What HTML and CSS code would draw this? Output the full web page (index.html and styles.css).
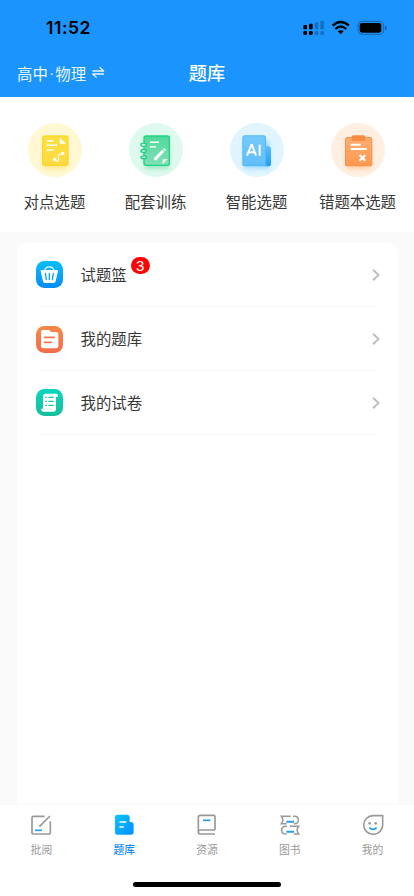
FILE: index.html
```html
<!DOCTYPE html>
<html lang="zh-CN">
<head>
<meta charset="utf-8">
<meta name="viewport" content="width=device-width, initial-scale=1">
<title>题库</title>
<link rel="stylesheet" href="styles.css">
</head>
<body>
<div class="app">
  <header class="header">
    <div class="status">
      <span class="time">11:52</span>
      <svg class="status-icons" viewBox="288 60 252 48">
        <g fill="#000"><rect x="289" y="75" width="11" height="13" rx="3"/><rect x="306" y="71" width="11" height="17" rx="3"/><rect x="289" y="93" width="11" height="12" rx="4"/><rect x="306" y="93" width="11" height="12" rx="4"/></g>
        <g fill="#1670c1"><rect x="323" y="67" width="11" height="21" rx="3"/><rect x="340" y="62" width="11" height="26" rx="3"/><rect x="323" y="93" width="11" height="12" rx="4"/><rect x="340" y="93" width="11" height="12" rx="4"/></g>
        <g fill="none" stroke="#000" stroke-width="6.5"><path d="M377 77Q401 55 426 77"/><path d="M385 87Q401 72 418 87"/></g>
        <path d="M392 94Q401 87 410 94L401 103Z"/>
        <rect x="453" y="64" width="77" height="39" rx="12" fill="none" stroke="#1264ad" stroke-width="3"/>
        <rect x="458" y="69" width="65" height="29" rx="7"/>
        <path d="M534 77Q540 80 540 84T534 91Z" fill="#1264ad"/>
      </svg>
    </div>
    <div class="nav">
      <div class="subject"><span>高中<i class="dot">·</i>物理</span>
        <svg class="swap" viewBox="278 200 38 40" fill="none" stroke="#e8f5ff" stroke-width="4" stroke-linejoin="round"><path d="M279 215H313L301 204M314 224H280L292 235"/></svg>
      </div>
      <h1>题库</h1>
      <span></span>
    </div>
  </header>

  <section class="shortcuts">
    <div class="shortcut">
      <svg viewBox="38 23 162 162">
        <defs><linearGradient id="y" x2="0" y2="1"><stop stop-color="#f9dc2e"/><stop offset="1" stop-color="#ffd32e"/></linearGradient>
        <filter id="blur" x="-30%" y="-30%" width="160%" height="160%"><feGaussianBlur stdDeviation="6"/></filter></defs>
        <circle cx="119" cy="104" r="81" fill="#fff8d2"/>
        <rect x="84" y="75" width="72" height="85" rx="8" fill="#ffd632" opacity=".45" filter="url(#blur)"/>
        <rect x="80" y="60" width="80" height="92" rx="8" fill="url(#y)"/>
        <rect x="84" y="64" width="72" height="84" rx="6" fill="#ffe65c" opacity=".4"/>
        <path d="M133 66L153 86H137Q133 86 133 82Z" fill="#fffbe2"/>
        <g stroke="#fff" fill="none" stroke-width="4.5"><path d="M94 77H114M94 90H125M94 104H114"/><path d="M118 133C127 143 132 134 129 127C126 117 136 116 142 116" stroke-width="3.5"/></g>
        <circle cx="118" cy="132" r="5" fill="#fff"/><circle cx="142" cy="114" r="5" fill="#fff"/>
      </svg><span>对点选题</span>
    </div>
    <div class="shortcut">
      <svg viewBox="40 23 162 162">
        <defs><linearGradient id="g" x2="0" y2="1"><stop stop-color="#51d99b"/><stop offset="1" stop-color="#80dfb8"/></linearGradient></defs>
        <circle cx="121" cy="104" r="81" fill="#def9ed"/>
        <rect x="88" y="75" width="72" height="85" rx="8" fill="#31ce88" opacity=".4" filter="url(#blur)"/>
        <rect x="83" y="60" width="80" height="92" rx="8" fill="#21d482"/><rect x="87" y="64" width="72" height="84" rx="5" fill="url(#g)"/>
        <g fill="#def9ed" stroke="#20ce82" stroke-width="4"><ellipse cx="84" cy="88" rx="8" ry="4.5"/><ellipse cx="84" cy="107" rx="8" ry="4.5"/><ellipse cx="84" cy="126" rx="8" ry="4.5"/></g>
        <path d="M103 81H130M103 94H121" stroke="#fff" stroke-width="4.5"/>
        <path d="M118 132L143 106" stroke="#fff" stroke-width="9"/><path d="M115 135L117 126L125 134Z" fill="#fff"/><path d="M145 104L148 101" stroke="#fff" stroke-width="9"/>
        <path d="M141 147V136Q141 131 146 131H156Z" fill="#e8fff5"/>
      </svg><span>配套训练</span>
    </div>
    <div class="shortcut">
      <svg viewBox="43 23 162 162">
        <defs><linearGradient id="b" x2="0" y2="1"><stop stop-color="#75cafc"/><stop offset="1" stop-color="#61bdfa"/></linearGradient><linearGradient id="b2" x2="0" y2="1"><stop stop-color="#5bbefa"/><stop offset="1" stop-color="#219cef"/></linearGradient></defs>
        <circle cx="124" cy="104" r="81" fill="#e1f5fe"/>
        <rect x="84" y="76" width="78" height="84" rx="8" fill="#47b4ff" opacity=".4" filter="url(#blur)"/>
        <path d="M147 93H158Q166 93 166 101V145Q166 153 158 153H147Z" fill="url(#b2)"/>
        <path d="M88 60H143Q151 60 151 68V144Q151 150 157 153H88Q80 153 80 145V68Q80 60 88 60Z" fill="#50b8fc"/>
        <rect x="83" y="63" width="65" height="87" rx="6" fill="url(#b)"/>
        <path d="M94 121L107 89H109L121 121M99 111H116M132 88V121" fill="none" stroke="#fff" stroke-width="6"/>
      </svg><span>智能选题</span>
    </div>
    <div class="shortcut">
      <svg viewBox="61 23 162 162">
        <defs><linearGradient id="o" x2="0" y2="1"><stop stop-color="#ffad70"/><stop offset="1" stop-color="#ff9951"/></linearGradient></defs>
        <circle cx="142" cy="104" r="81" fill="#ffefe0"/>
        <rect x="108" y="76" width="72" height="84" rx="8" fill="#ff9850" opacity=".4" filter="url(#blur)"/>
        <rect x="103" y="65" width="82" height="88" rx="8" fill="#f99147"/><rect x="106" y="68" width="76" height="82" rx="5" fill="url(#o)"/>
        <rect x="122" y="60" width="43" height="17" rx="7" fill="#f78c43"/>
        <path d="M120 88H150M120 101H168" stroke="#fff" stroke-width="6"/><path d="M147 119L164 136M164 119L147 136" stroke="#fff" stroke-width="6.5"/>
      </svg><span>错题本选题</span>
    </div>
  </section>

  <main class="content">
    <div class="card">
      <div class="row">
        <svg class="row-icon" viewBox="108 108 81 81">
          <defs><linearGradient id="rb" x2="0" y2="1"><stop stop-color="#08bffa"/><stop offset="1" stop-color="#078af8"/></linearGradient></defs>
          <rect x="108" y="108" width="81" height="81" rx="25" fill="url(#rb)"/>
          <path d="M134 139C134 121 162 121 162 139" fill="none" stroke="#fff" stroke-width="4"/>
          <path d="M125 135H171Q175 135 174 139L167 169Q166 174 161 174H135Q130 174 129 169L122 139Q121 135 125 135Z" fill="#fff"/>
          <path d="M136 145L139 164M148 145V164M160 145L157 164" stroke="#0aa5f9" stroke-width="4" stroke-linecap="round"/>
        </svg>
        <span class="row-label">试题篮<b class="badge">3</b></span>
        <svg class="chevron" viewBox="0 0 8 12"><path d="M1 .7L6.6 6L1 11.3"/></svg>
      </div>
      <div class="row">
        <svg class="row-icon row-icon-files" viewBox="108 303 81 81">
          <defs><linearGradient id="ro" x2="0" y2="1"><stop stop-color="#f68a46"/><stop offset="1" stop-color="#f56b4b"/></linearGradient></defs>
          <rect x="108" y="303" width="81" height="81" rx="25" fill="url(#ro)"/>
          <path d="M128 315H145Q149 315 151 318L153 321H169Q175 321 175 327V364Q175 370 169 370H129Q123 370 123 364V320Q123 315 128 315Z" fill="#fff"/>
          <path d="M133 337H163M133 352H154" stroke="#f67850" stroke-width="5" stroke-linecap="round"/>
        </svg>
        <span class="row-label">我的题库</span>
        <svg class="chevron" viewBox="0 0 8 12"><path d="M1 .7L6.6 6L1 11.3"/></svg>
      </div>
      <div class="row">
        <svg class="row-icon" viewBox="108 492 81 81">
          <defs><linearGradient id="rg" x2="0" y2="1"><stop stop-color="#0bd6bd"/><stop offset="1" stop-color="#16bf9d"/></linearGradient></defs>
          <rect x="108" y="492" width="81" height="81" rx="25" fill="url(#rg)"/>
          <path d="M135 506H170Q175 508 174 516H168V552Q168 560 160 560H129Q123 559 123 551H129V513Q129 507 135 506Z" fill="#fff"/>
          <path d="M128 552H156" stroke="#b9eee2" stroke-width="2"/>
          <path d="M136 517H141M145 517H161M136 529H141M145 529H161M136 541H141M145 541H161" stroke="#12c8aa" stroke-width="4"/>
        </svg>
        <span class="row-label">我的试卷</span>
        <svg class="chevron" viewBox="0 0 8 12"><path d="M1 .7L6.6 6L1 11.3"/></svg>
      </div>
    </div>
  </main>

  <nav class="tabbar">
    <div class="tabs">
      <div class="tab"><svg viewBox="91 58 66 66"><path d="M135 65H101Q97 65 97 69V114Q97 118 101 118H148Q152 118 152 114V80M119 96L151 64" fill="none" stroke="#999" stroke-width="5"/><path d="M106 107H127" stroke="#2aa0ee" stroke-width="5"/></svg><span>批阅</span></div>
      <div class="tab active"><svg viewBox="339 58 66 66"><defs><linearGradient id="t" x2="1" y2="1"><stop stop-color="#08c4ff"/><stop offset="1" stop-color="#078eff"/></linearGradient></defs><path d="M352 60H381Q389 60 389 68V82H393Q401 82 401 90V112Q401 120 393 120H352Q345 120 345 112V68Q345 60 352 60Z" fill="url(#t)"/><path d="M389 84V112" stroke="#0798f4" stroke-width="1.5"/><path d="M360 82H377M360 97H370" stroke="#fff" stroke-width="4.5" stroke-linecap="round"/></svg><span>题库</span></div>
      <div class="tab"><svg viewBox="138 58 66 66"><path d="M195 106V66Q195 62 191 62H151Q145 62 145 68V111Q145 118 152 118H195M145 111Q145 106 152 106H195" fill="none" stroke="#999" stroke-width="5"/><path d="M159 77H181" stroke="#2399ec" stroke-width="5"/></svg><span>资源</span></div>
      <div class="tab"><svg viewBox="43 58 66 66"><g fill="none" stroke="#999" stroke-width="4.5"><path d="M78 65H50Q59 76 50 87H66M85 65H90Q101 65 101 76Q101 87 90 87H87"/><path d="M67 95H63Q51 95 51 106.500T63 118H66M75 95H102Q93 106 102 118H87"/></g><path d="M65 81H88M65 111H88" stroke="#27a0ed" stroke-width="6"/></svg><span>图书</span></div>
      <div class="tab"><svg viewBox="292 58 66 66"><path d="M325 63H354V91A28.500 28 0 1 1 325 63Z" fill="none" stroke="#999" stroke-width="4.8"/><circle cx="315" cy="86" r="4" fill="#999"/><circle cx="333" cy="86" r="4" fill="#999"/><path d="M314 99Q325 109 336 99" fill="none" stroke="#229eee" stroke-width="5"/></svg><span>我的</span></div>
    </div>
    <div class="home"></div>
  </nav>
</div>
</body>
</html>
```
FILE: styles.css
```css
* { box-sizing: border-box; }
body {
  margin: 0;
  font-family: "Noto Sans CJK SC", sans-serif;
  color: #383838;
  background: #fafafa;
}
svg { display: block; flex: none; }
.app {
  height: 896px;
  display: flex;
  flex-direction: column;
  overflow: hidden;
}
.header {
  height: 97px;
  background: #1b95fd;
}
.status {
  height: 49px;
  display: flex;
  justify-content: space-between;
  align-items: center;
  padding: 7px 27px 0 46px;
}
.time {
  font: 600 17.5px/20px Inter, sans-serif;
  letter-spacing: .55px;
  color: #000;
}
.status-icons { width: 84px; height: 16px; }
.nav {
  height: 46px;
  padding: 0 17px;
  display: grid;
  grid-template-columns: 1fr auto 1fr;
  align-items: center;
  color: #fff;
}
.subject {
  display: flex;
  align-items: center;
  gap: 6px;
  padding-top: 2px;
  font-size: 15.4px;
  line-height: 24px;
  color: #e8f5ff;
}
.subject span { display: flex; }
.dot {
  width: 7.500px;
  font-style: normal;
  font-family: "Liberation Sans", sans-serif;
  text-align: center;
}
.swap { width: 12.7px; height: 13.3px; }
h1 {
  margin: 0;
  font-size: 18.2px;
  line-height: 26px;
  font-weight: 500;
}
.shortcuts {
  height: 135px;
  padding: 26px 6px 0 4px;
  display: grid;
  grid-template-columns: repeat(4, 1fr);
  background: #fff;
}
.shortcut {
  display: flex;
  flex-direction: column;
  align-items: center;
  gap: 12px;
  font-size: 15.4px;
  line-height: 24px;
  white-space: nowrap;
}
.shortcut svg { width: 54px; height: 54px; }
.content {
  flex: 1;
  padding: 11px 16px 0 17px;
}
.card {
  height: 100%;
  padding: 0 22px 0 23px;
  background: #fff;
  border-radius: 9px 9px 0 0;
}
.row {
  height: 64px;
  display: flex;
  align-items: center;
  border-bottom: 1px solid #f5f5f5;
}
.row-icon { width: 27px; height: 27px; margin-left: -4px; }
.row-icon-files { margin-top: 2px; }
.row-label {
  flex: 1;
  display: flex;
  margin: 0 0 0 17.5px;
  font-size: 15.4px;
  line-height: 23px;
}
.badge {
  width: 19px;
  height: 17px;
  margin: -6px 0 0 4px;
  border-radius: 9px;
  background: #f90505;
  color: #fff;
  font: 400 15px/17px "Liberation Sans", sans-serif;
  text-align: center;
}
.chevron {
  width: 8px;
  height: 12px;
  margin-right: -4px;
  fill: none;
  stroke: #bdbdbd;
  stroke-width: 1.9;
}
.tabbar {
  height: 92px;
  background: #fff;
  border-top: 1px solid #fafafa;
}
.tabs { display: flex; height: 77px; padding-top: 9px; }
.tab {
  flex: 1;
  display: flex;
  flex-direction: column;
  align-items: center;
  gap: 5px;
  font-size: 10.8px;
  line-height: 17px;
  color: #999;
}
.tab svg { width: 22px; height: 22px; }
.tab.active { color: #168bf5; font-weight: 500; }
.home {
  width: 148px;
  height: 5px;
  margin: 0 auto;
  border-radius: 3px;
  background: #000;
}
```
